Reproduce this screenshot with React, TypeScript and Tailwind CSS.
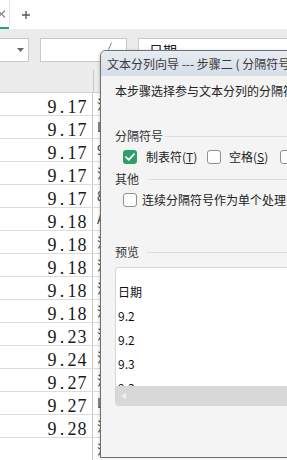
import React from "react";

function Check({ on }: { on?: boolean }) {
  return on ? (
    <div className="w-[14px] h-[14px] rounded-[3px] bg-[#2e9f6a] flex items-center justify-center shrink-0">
      <svg width="10" height="8" viewBox="0 0 10 8">
        <path d="M1 4.2 L3.8 6.8 L9 1.2" stroke="#fff" strokeWidth="1.8" fill="none" strokeLinecap="round" strokeLinejoin="round" />
      </svg>
    </div>
  ) : (
    <div className="w-[14px] h-[14px] rounded-[3px] bg-white border border-[#8f8f8f] shrink-0" />
  );
}

export default function App() {
  const rows: [string, string][] = [
    ["9.17", "江"], ["9.17", "L"], ["9.17", "9"], ["9.17", "江"], ["9.17", "8"],
    ["9.18", "A"], ["9.18", "江"], ["9.18", "江"], ["9.18", "江"], ["9.18", "江"],
    ["9.23", "江"], ["9.24", "江"], ["9.27", "江"], ["9.27", "L"], ["9.28", "江"], ["", "江"],
  ];
  return (
    <div className="relative w-[287px] h-[460px] overflow-hidden bg-white font-['Noto_Sans_CJK_SC',sans-serif]">
      {/* tab bar */}
      <div className="h-[29px] flex items-start bg-white">
        <div className="w-[9px] h-[29px] flex flex-col">
          <div className="flex-1 pt-[10px]">
            <svg width="7" height="8" viewBox="0 0 7 8">
              <path d="M-2 0.5 L5 7.5 M5 0.5 L-2 7.5" stroke="#7d7d7d" strokeWidth="1.1" fill="none" />
            </svg>
          </div>
          <div className="h-[2px] bg-[#22a46e]" />
        </div>
        <div className="w-px h-[25px] bg-[#e3e3e3]" />
        <svg className="ml-[12px] mt-[11px]" width="8" height="8" viewBox="0 0 8 8">
          <path d="M4 0 V8 M0 4 H8" stroke="#555" strokeWidth="1.3" fill="none" />
        </svg>
      </div>

      {/* formula bar */}
      <div className="h-[34px] bg-[#ebebeb] pt-[9px] flex">
        <div className="w-[29px] h-[24px] bg-white border border-l-0 border-[#c9c9c9] flex items-center justify-end pr-[4px]">
          <svg width="7" height="4" viewBox="0 0 7 4">
            <path d="M0 0 H7 L3.5 4 Z" fill="#666" />
          </svg>
        </div>
        <div className="ml-[11px] w-[87px] h-[24px] bg-white border border-[#c9c9c9] flex items-start pl-[67px] pt-[3px]">
          <svg width="4" height="8" viewBox="0 0 4 8">
            <path d="M3.5 0.5 L0.5 7.5" stroke="#888" strokeWidth="1" fill="none" />
          </svg>
        </div>
        <div className="ml-[11px] flex-1 h-[24px] bg-white border border-r-0 border-[#c9c9c9] pl-[10px] text-[14px] leading-[22px] text-[#222]">
          日期
        </div>
      </div>

      {/* column header */}
      <div className="h-[30px] bg-[#ececec] border-b border-[#d2d2d2] flex">
        <div className="w-[93px]" />
        <div className="w-px h-[22px] self-end bg-[#c4c4c4]" />
      </div>

      {/* rows */}
      <div className="flex flex-col">
        {rows.map(([v, n], i) => (
          <div key={i} className="h-[23px] flex border-b border-[#dcdcdc]">
            <div className="w-[93px] shrink-0 border-r border-[#c8c8c8] flex justify-end pr-[5px] pt-[5px] font-['Liberation_Serif',serif] text-[18px] leading-[18px] text-[#1a1a1a]">
              {v.split("").map((c, j) => (
                <span key={j} className="w-[10px] text-center">{c}</span>
              ))}
            </div>
            <div className="pl-[4px] text-[13px] leading-[22px] text-[#444] whitespace-nowrap overflow-hidden">
              {n}
            </div>
          </div>
        ))}
      </div>

      {/* dialog */}
      <div className="absolute left-[100px] top-[50px] w-[200px] h-[408px] rounded-tl-[6px] border border-[#707070] bg-[#f4f4f4] flex flex-col overflow-hidden shadow-[-1px_0_3px_rgba(0,0,0,0.15)]">
        <div className="h-[25px] shrink-0 bg-gradient-to-b from-[#e7ecf2] to-[#d5dde7] pl-[6px] text-[12px] leading-[25px] text-[#3a3a3a] whitespace-nowrap">
          文本分列向导 --- 步骤二 ( 分隔符号 )
        </div>
        <div className="flex-1 pl-[14px] flex flex-col text-[12px] leading-[16px] text-[#222] whitespace-nowrap">
          <div className="mt-[7px]">本步骤选择参与文本分列的分隔符号</div>

          <div className="mt-[29px] flex items-center">
            <span className="text-[#333]">分隔符号</span>
            <div className="ml-[2px] flex-1 h-px bg-[#dedede]" />
          </div>

          <div className="mt-[5px] h-[16px] flex items-center pl-[8px]">
            <div className="w-[84px] flex items-center shrink-0">
              <Check on />
              <span className="ml-[9px]">制表符(<u>T</u>)</span>
            </div>
            <div className="w-[73px] flex items-center shrink-0">
              <Check />
              <span className="ml-[8px]">空格(<u>S</u>)</span>
            </div>
            <Check />
          </div>

          <div className="mt-[6px] flex items-center">
            <span className="text-[#333]">其他</span>
            <div className="ml-[9px] flex-1 h-px bg-[#dedede]" />
          </div>

          <div className="mt-[5px] h-[16px] flex items-center pl-[8px]">
            <Check />
            <span className="ml-[5px]">连续分隔符号作为单个处理(R)</span>
          </div>

          <div className="mt-[36px] flex items-center">
            <span className="text-[#333]">预览</span>
            <div className="ml-[8px] flex-1 h-px bg-[#dedede]" />
          </div>

          <div className="mt-[7px] h-[139px] border border-r-0 border-[#d6d6d6] rounded-l-[4px] bg-white flex flex-col overflow-hidden">
            <div className="flex-1 overflow-hidden pl-[2px] pt-[12px] leading-[24px] text-[#111]">
              <div>日期</div>
              <div>9.2</div>
              <div>9.2</div>
              <div>9.3</div>
              <div>9.3</div>
            </div>
            <div className="h-[19px] shrink-0 bg-[#d8d8d8] flex items-center pl-[5px]">
              <svg width="5" height="6" viewBox="0 0 5 6">
                <path d="M5 0 V6 L0 3 Z" fill="#f2f2f2" />
              </svg>
            </div>
          </div>
        </div>
      </div>
    </div>
  );
}
